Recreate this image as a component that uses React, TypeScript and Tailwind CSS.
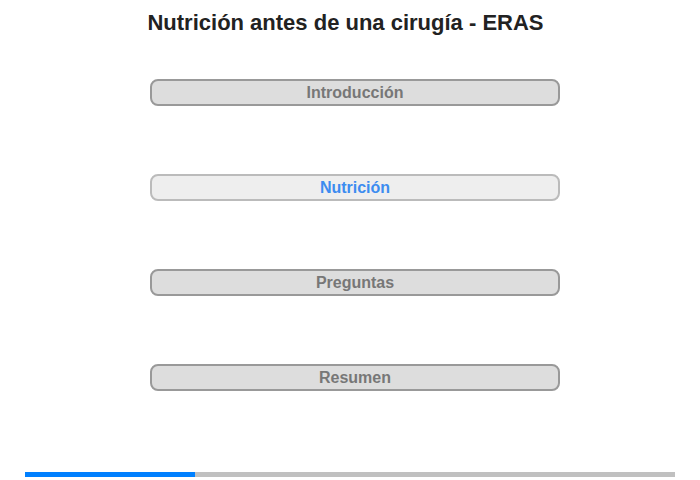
export default function App() {
  const items = [
    { label: "Introducción", active: false },
    { label: "Nutrición", active: true },
    { label: "Preguntas", active: false },
    { label: "Resumen", active: false },
  ];
  return (
    <div className="flex h-[480px] w-[700px] flex-col bg-white font-['Liberation_Sans',Arial,sans-serif]">
      {/* Title */}
      <div className="flex h-[44px] items-center justify-center pr-[9px]">
        <h1 className="text-[22px] font-bold text-[#222222]">
          Nutrición antes de una cirugía - ERAS
        </h1>
      </div>

      {/* Menu */}
      <div className="ml-[150px] mt-[35px] flex w-[410px] flex-col gap-[68px]">
        {items.map((item) => (
          <button
            key={item.label}
            className={
              item.active
                ? "flex h-[27px] items-center justify-center rounded-[8px] border-2 border-[#bbbbbb] bg-[#eeeeee] text-[16px] font-bold text-[#3c8cf0]"
                : "flex h-[27px] items-center justify-center rounded-[8px] border-2 border-[#999999] bg-[#dddddd] text-[16px] font-bold text-[#777777]"
            }
          >
            {item.label}
          </button>
        ))}
      </div>

      {/* Progress */}
      <div className="mx-[25px] mb-[3px] mt-auto flex h-[5px] bg-[#c0c0c0]">
        <div className="h-full w-[170px] bg-[#0080ff]" />
      </div>
    </div>
  );
}
